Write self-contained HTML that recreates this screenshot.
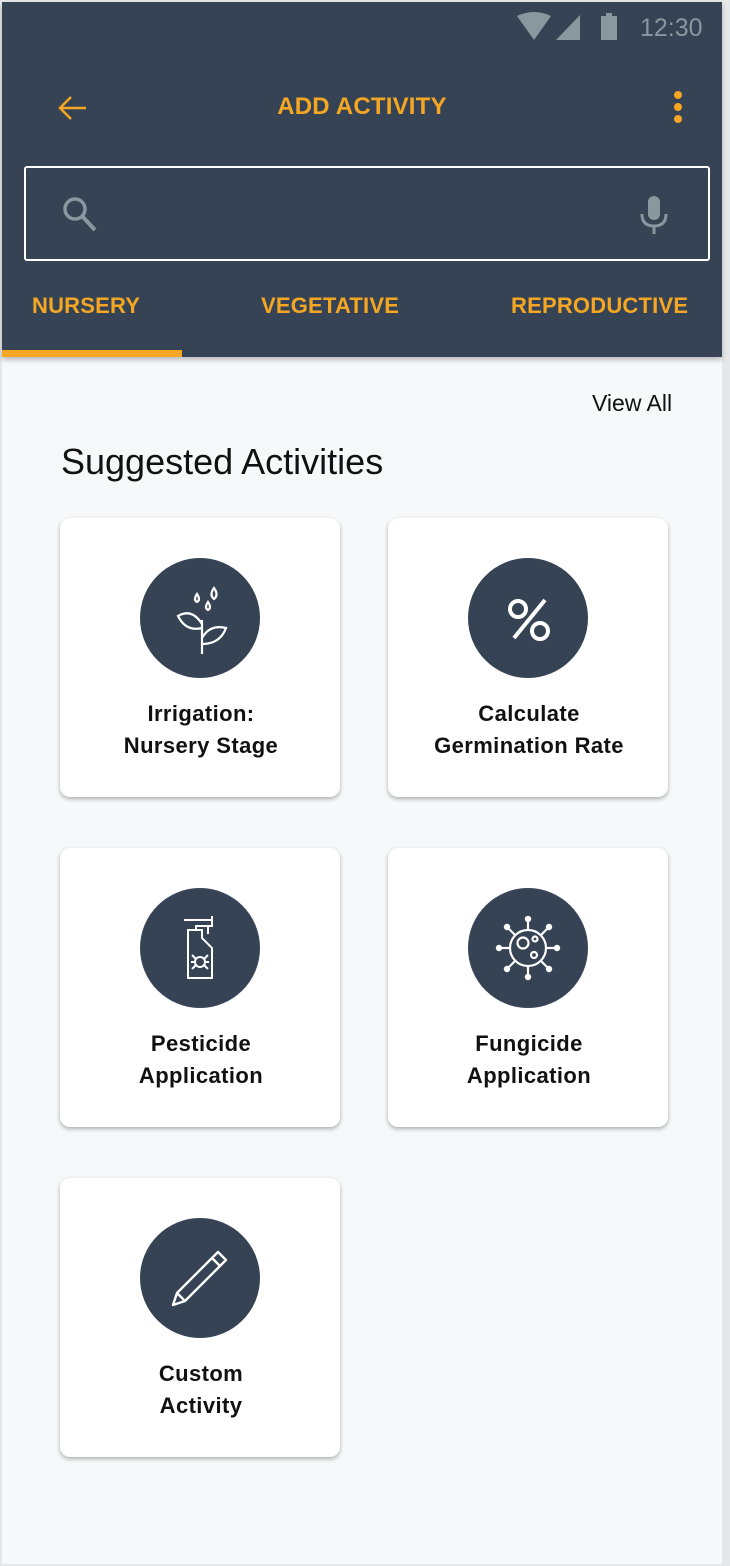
<!DOCTYPE html>
<html><head><style>
*{margin:0;padding:0;box-sizing:border-box}
body{width:730px;height:1566px;background:#e6e7e9;font-family:"Liberation Sans",sans-serif;position:relative;overflow:hidden}
.frame{position:absolute;left:2px;top:2px;width:720px;height:1562px;background:#f7f8fa}
.hdr{position:absolute;left:0;top:0;width:720px;height:355px;background:#354354;box-shadow:0 3px 5px rgba(0,0,0,.25)}
.o{color:#f5a623}
.card{position:absolute;width:280px;height:279px;background:#fff;border-radius:10px;box-shadow:0 2px 4px rgba(0,0,0,.3)}
.circ{position:absolute;left:80px;top:40px;width:120px;height:120px;border-radius:50%;background:#354354}
.circ svg{position:absolute;left:0;top:0}
.lbl{position:absolute;top:180px;left:1px;width:280px;text-align:center;font-size:22px;line-height:32px;color:#111;font-weight:bold;letter-spacing:0.4px}
.tab{position:absolute;top:291px;font-size:22px;font-weight:bold;color:#f5a623;letter-spacing:0.2px}
</style></head><body>
<div class="frame">
<div class="hdr">
 <svg style="position:absolute;left:512px;top:10px" width="110" height="30">
  <path d="M3 4 Q20 -4 37 4 L20 28 Z" fill="#8a979e"/>
  <path d="M66 3 L66 28 L42 28 Z" fill="#8a979e"/>
  <rect x="87" y="4" width="16" height="24" fill="#8a979e"/><rect x="92" y="1" width="6" height="4" fill="#8a979e"/>
 </svg>
 <div style="position:absolute;left:638px;top:12px;font-size:25px;color:#8a979e">12:30</div>
 <svg style="position:absolute;left:54px;top:90px" width="36" height="30"><path d="M30 16 H5 M15 5 L4 16 L15 27" stroke="#f5a623" stroke-width="2.5" fill="none"/></svg>
 <div class="o" style="position:absolute;left:0;width:720px;text-align:center;top:91px;font-size:24px;font-weight:bold;letter-spacing:0.2px">ADD ACTIVITY</div>
 <svg style="position:absolute;left:668px;top:88px" width="16" height="36"><circle cx="8" cy="5" r="4" fill="#f5a623"/><circle cx="8" cy="17" r="4" fill="#f5a623"/><circle cx="8" cy="29" r="4" fill="#f5a623"/></svg>
 <div style="position:absolute;left:22px;top:164px;width:686px;height:95px;border:2px solid #fff;border-radius:3px"></div>
 <svg style="position:absolute;left:58px;top:192px" width="40" height="40"><circle cx="15" cy="15" r="10" stroke="#8a979e" stroke-width="3.5" fill="none"/><path d="M22 22 L35 36" stroke="#8a979e" stroke-width="4"/></svg>
 <svg style="position:absolute;left:634px;top:192px" width="36" height="42"><rect x="12" y="2" width="12" height="24" rx="6" fill="#8a979e"/><path d="M6 20 Q6 32 18 32 Q30 32 30 20" stroke="#8a979e" stroke-width="3" fill="none"/><path d="M18 32 V40" stroke="#8a979e" stroke-width="3"/></svg>
 <div class="tab" style="left:30px">NURSERY</div>
 <div class="tab" style="left:259px">VEGETATIVE</div>
 <div class="tab" style="left:509px">REPRODUCTIVE</div>
 <div style="position:absolute;left:0;top:348px;width:180px;height:7px;background:#f5a623"></div>
</div>
<div style="position:absolute;left:590px;top:388px;font-size:23px;color:#111">View All</div>
<div style="position:absolute;left:59px;top:439px;font-size:36px;color:#111;font-weight:300">Suggested Activities</div>

<div class="card" style="left:58px;top:516px"><div class="circ"><svg width="120" height="120" fill="none" stroke="#fff" stroke-width="2.2">
 <path d="M62 96 V62 M62 80 Q70 66 86 70 Q80 86 62 86 M62 66 Q52 50 38 58 Q46 74 62 70"/>
 <path d="M57 36 q-4 6 0 8 q4 -2 0 -8z M68 44 q-4 6 0 8 q4 -2 0 -8z M74 30 q-5 7 0 11 q5 -4 0 -11z"/></svg></div>
 <div class="lbl">Irrigation:<br>Nursery Stage</div></div>
<div class="card" style="left:386px;top:516px"><div class="circ"><svg width="120" height="120" fill="none" stroke="#fff" stroke-width="4">
 <circle cx="50" cy="51" r="8"/><circle cx="72" cy="73" r="8"/><path d="M77 42 L46 80"/></svg></div>
 <div class="lbl">Calculate<br>Germination Rate</div></div>
<div class="card" style="left:58px;top:846px"><div class="circ"><svg width="120" height="120" fill="none" stroke="#fff" stroke-width="2">
 <path d="M44 32 H72 V38 H56 V42 M48 42 H62 V50 L72 60 V90 H48 Z M72 32 V28 M68 38 V46"/>
 <circle cx="60" cy="74" r="5"/><path d="M52 67 L56 71 M68 67 L64 71 M52 81 L56 77 M68 81 L64 77 M51 74 H55 M65 74 H69"/></svg></div>
 <div class="lbl">Pesticide<br>Application</div></div>
<div class="card" style="left:386px;top:846px"><div class="circ"><svg width="120" height="120" fill="none" stroke="#fff" stroke-width="2.2">
 <circle cx="60" cy="60" r="18"/><circle cx="55" cy="55" r="5.5"/><circle cx="67" cy="51" r="2.5"/><circle cx="66" cy="67" r="3"/>
 <path d="M60 42 V32 M60 78 V88 M42 60 H32 M78 60 H88 M47 47 L40 40 M73 73 L80 80 M73 47 L80 40 M47 73 L40 80"/>
 <g fill="#fff" stroke="none"><circle cx="60" cy="31" r="3.2"/><circle cx="60" cy="89" r="3.2"/><circle cx="31" cy="60" r="3.2"/><circle cx="89" cy="60" r="3.2"/><circle cx="39" cy="39" r="3.2"/><circle cx="81" cy="81" r="3.2"/><circle cx="81" cy="39" r="3.2"/><circle cx="39" cy="81" r="3.2"/></g></svg></div>
 <div class="lbl">Fungicide<br>Application</div></div>
<div class="card" style="left:58px;top:1176px"><div class="circ"><svg width="120" height="120" fill="none" stroke="#fff" stroke-width="2.4" stroke-linejoin="round">
 <path d="M78 34 L86 42 L45 83 L33 87 L37 75 Z M72 40 L80 48 M37 75 L45 83"/></svg></div>
 <div class="lbl">Custom<br>Activity</div></div>
</div>
</body></html>
